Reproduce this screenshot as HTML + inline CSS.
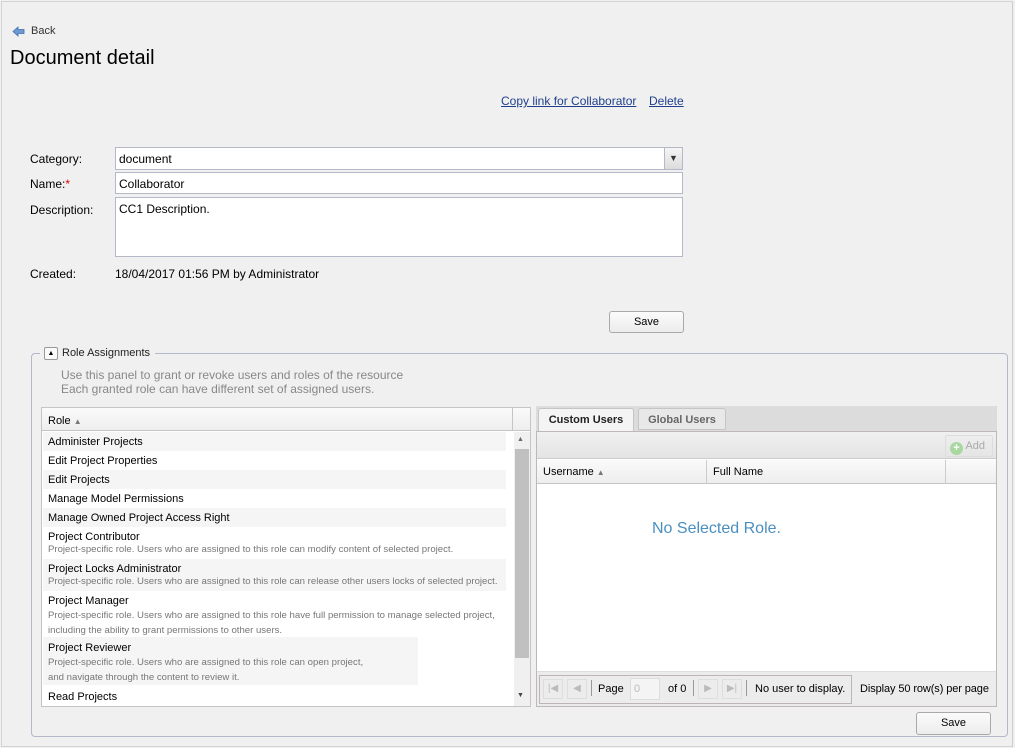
<!DOCTYPE html>
<html><head><style>
*{box-sizing:border-box;margin:0;padding:0}
body{width:1015px;height:748px;background:#f0f0f0;font-family:"Liberation Sans",sans-serif;font-size:12px;color:#000;position:relative;overflow:hidden}
.a{position:absolute;white-space:nowrap}
.pg{position:absolute;left:1px;top:1px;width:1012px;height:746px;border:1px solid #d4d4d4;border-right-color:#ccc}
.inp{position:absolute;background:#fff;border:1px solid #b5b8c8;padding:4px 3px 0;font-size:12px}
.btn{position:absolute;border:1px solid #a9a9a9;border-radius:3px;background:linear-gradient(#fbfbfb,#ececec);text-align:center;line-height:20px;font-size:11px}
.row{position:absolute;left:48px;font-size:11px}
.sub{color:#777;font-size:9.6px}
</style></head><body>
<div class="pg"></div>
<svg class="a" style="left:12px;top:26px" width="13" height="11" viewBox="0 0 13 11"><path d="M1 5.5L6 1v2.5h6v4H6V10z" fill="#6d9ad0" stroke="#3f6fae" stroke-width="0.8"/></svg>
<div class="a" style="left:31px;top:25px;font-size:11px;color:#333">Back</div>
<div class="a" style="left:10px;top:47px;font-size:20px">Document detail</div>
<div class="a" style="left:501px;top:94px;color:#1f3f8c;text-decoration:underline">Copy link for Collaborator</div>
<div class="a" style="left:649px;top:94px;color:#1f3f8c;text-decoration:underline">Delete</div>

<div class="a" style="left:30px;top:152px">Category:</div>
<div class="inp" style="left:115px;top:147px;width:568px;height:23px">document</div>
<div class="a" style="left:664px;top:148px;width:18px;height:21px;background:linear-gradient(#f5f5f5,#dcdcdc);border-left:1px solid #b5b8c8;text-align:center;font-size:9px;line-height:20px;color:#333">&#9660;</div>
<div class="a" style="left:30px;top:177px">Name:<span style="color:#d00">*</span></div>
<div class="inp" style="left:115px;top:172px;width:568px;height:22px">Collaborator</div>
<div class="a" style="left:30px;top:203px">Description:</div>
<div class="inp" style="left:115px;top:197px;width:568px;height:60px">CC1 Description.</div>
<div class="a" style="left:30px;top:267px">Created:</div>
<div class="a" style="left:115px;top:267px">18/04/2017 01:56 PM by Administrator</div>
<div class="btn" style="left:609px;top:311px;width:75px;height:22px">Save</div>

<div class="a" style="left:31px;top:353px;width:977px;height:384px;border:1px solid #b5b8c8;border-radius:4px"></div>
<div class="a" style="left:40px;top:345px;width:115px;height:16px;background:#f0f0f0"></div>
<div class="a" style="left:44px;top:347px;width:14px;height:13px;border:1px solid #999;border-radius:2px;background:#fafafa;font-size:7px;text-align:center;line-height:11px">&#9650;</div>
<div class="a" style="left:62px;top:347px;font-size:11px;color:#222">Role Assignments</div>
<div class="a" style="left:61px;top:368px;color:#888">Use this panel to grant or revoke users and roles of the resource</div>
<div class="a" style="left:61px;top:382px;color:#888">Each granted role can have different set of assigned users.</div>

<div class="a" style="left:41px;top:407px;width:490px;height:300px;border:1px solid #c5c5c5;background:#fff"></div>
<div class="a" style="left:42px;top:408px;width:488px;height:23px;background:linear-gradient(#fafafa,#eee);border-bottom:1px solid #c5c5c5"></div>
<div class="a" style="left:512px;top:408px;width:1px;height:23px;background:#c5c5c5"></div>
<div class="a" style="left:48px;top:415px;font-size:11px">Role <span style="font-size:8px;color:#777">&#9650;</span></div>
<div class="a" style="left:514px;top:432px;width:16px;height:274px;background:#f0f0f0"></div>
<div class="a" style="left:515px;top:449px;width:14px;height:209px;background:#c0c0c0"></div>
<div class="a" style="left:517px;top:436px;font-size:7px;color:#666">&#9650;</div>
<div class="a" style="left:517px;top:692px;font-size:7px;color:#444">&#9660;</div>
<div class="a" style="left:43px;top:432px;width:463px;height:19px;background:#f5f5f5"></div>
<div class="a" style="left:43px;top:470px;width:463px;height:19px;background:#f5f5f5"></div>
<div class="a" style="left:43px;top:508px;width:463px;height:19px;background:#f5f5f5"></div>
<div class="a" style="left:43px;top:559px;width:463px;height:32px;background:#f5f5f5"></div>
<div class="a" style="left:43px;top:637px;width:375px;height:48px;background:#f5f5f5"></div>
<div class="row" style="top:436px">Administer Projects</div>
<div class="row" style="top:455px">Edit Project Properties</div>
<div class="row" style="top:474px">Edit Projects</div>
<div class="row" style="top:493px">Manage Model Permissions</div>
<div class="row" style="top:512px">Manage Owned Project Access Right</div>
<div class="row" style="top:531px">Project Contributor<br><span class="sub">Project-specific role. Users who are assigned to this role can modify content of selected project.</span></div>
<div class="row" style="top:563px">Project Locks Administrator<br><span class="sub">Project-specific role. Users who are assigned to this role can release other users locks of selected project.</span></div>
<div class="row" style="top:594px;line-height:14px">Project Manager<br><span class="sub">Project-specific role. Users who are assigned to this role have full permission to manage selected project,<br>including the ability to grant permissions to other users.</span></div>
<div class="row" style="top:641px;line-height:14px">Project Reviewer<br><span class="sub">Project-specific role. Users who are assigned to this role can open project,<br>and navigate through the content to review it.</span></div>
<div class="row" style="top:691px">Read Projects</div>

<div class="a" style="left:536px;top:406px;width:461px;height:25px;background:#dcdcdc"></div>
<div class="a" style="left:538px;top:408px;width:96px;height:23px;background:#f4f4f4;border:1px solid #c5c5c5;border-bottom:none;border-radius:3px 3px 0 0;font-weight:bold;font-size:11px;text-align:center;line-height:22px;color:#222">Custom Users</div>
<div class="a" style="left:638px;top:408px;width:88px;height:22px;background:#e8e8e8;border:1px solid #c5c5c5;border-radius:3px 3px 0 0;font-weight:bold;font-size:11px;text-align:center;line-height:22px;color:#666">Global Users</div>
<div class="a" style="left:536px;top:431px;width:461px;height:276px;border:1px solid #c0b8b8;background:#fff"></div>
<div class="a" style="left:537px;top:432px;width:459px;height:27px;background:linear-gradient(#f0f0f0,#e4e4e4);border-bottom:1px solid #ccc"></div>
<div class="a" style="left:945px;top:435px;width:48px;height:22px;border:1px solid #ddd;border-radius:2px;font-size:11px;color:#aaa;line-height:20px;padding-left:4px"><span style="display:inline-block;width:13px;height:13px;border-radius:50%;background:#a8d8a0;color:#fff;text-align:center;line-height:13px;font-weight:bold;vertical-align:-2px">+</span> Add</div>
<div class="a" style="left:537px;top:460px;width:459px;height:24px;background:linear-gradient(#fafafa,#eee);border-bottom:1px solid #c5c5c5"></div>
<div class="a" style="left:706px;top:460px;width:1px;height:24px;background:#ccc"></div>
<div class="a" style="left:945px;top:460px;width:1px;height:24px;background:#ccc"></div>
<div class="a" style="left:543px;top:466px;font-size:11px">Username <span style="font-size:8px;color:#777">&#9650;</span></div>
<div class="a" style="left:713px;top:466px;font-size:11px">Full Name</div>
<div class="a" style="left:652px;top:520px;font-size:16px;color:#4a8fc0">No Selected Role.</div>
<div class="a" style="left:537px;top:671px;width:459px;height:35px;background:#ececec;border-top:1px solid #ddd"></div>
<div class="a" style="left:539px;top:675px;width:313px;height:29px;border:1px solid #bdb5b5"></div>
<div class="a" style="left:543px;top:679px;width:20px;height:20px;border:1px solid #ddd;color:#bbb;font-size:10px;text-align:center;line-height:18px">|&#9664;</div>
<div class="a" style="left:567px;top:679px;width:20px;height:20px;border:1px solid #ddd;color:#bbb;font-size:10px;text-align:center;line-height:18px">&#9664;</div>
<div class="a" style="left:591px;top:680px;width:1px;height:16px;background:#999"></div>
<div class="a" style="left:598px;top:683px;font-size:11px">Page</div>
<div class="a" style="left:630px;top:678px;width:30px;height:22px;border:1px solid #ddd;background:#f4f4f4;color:#bbb;font-size:11px;padding:4px 3px">0</div>
<div class="a" style="left:668px;top:683px;font-size:11px">of 0</div>
<div class="a" style="left:693px;top:680px;width:1px;height:16px;background:#999"></div>
<div class="a" style="left:698px;top:679px;width:20px;height:20px;border:1px solid #ddd;color:#bbb;font-size:10px;text-align:center;line-height:18px">&#9654;</div>
<div class="a" style="left:722px;top:679px;width:20px;height:20px;border:1px solid #ddd;color:#bbb;font-size:10px;text-align:center;line-height:18px">&#9654;|</div>
<div class="a" style="left:746px;top:680px;width:1px;height:16px;background:#999"></div>
<div class="a" style="left:755px;top:683px;font-size:11px">No user to display.</div>
<div class="a" style="left:860px;top:683px;font-size:11px;letter-spacing:-0.1px">Display 50 row(s) per page</div>
<div class="btn" style="left:916px;top:712px;width:75px;height:23px">Save</div>
</body></html>
